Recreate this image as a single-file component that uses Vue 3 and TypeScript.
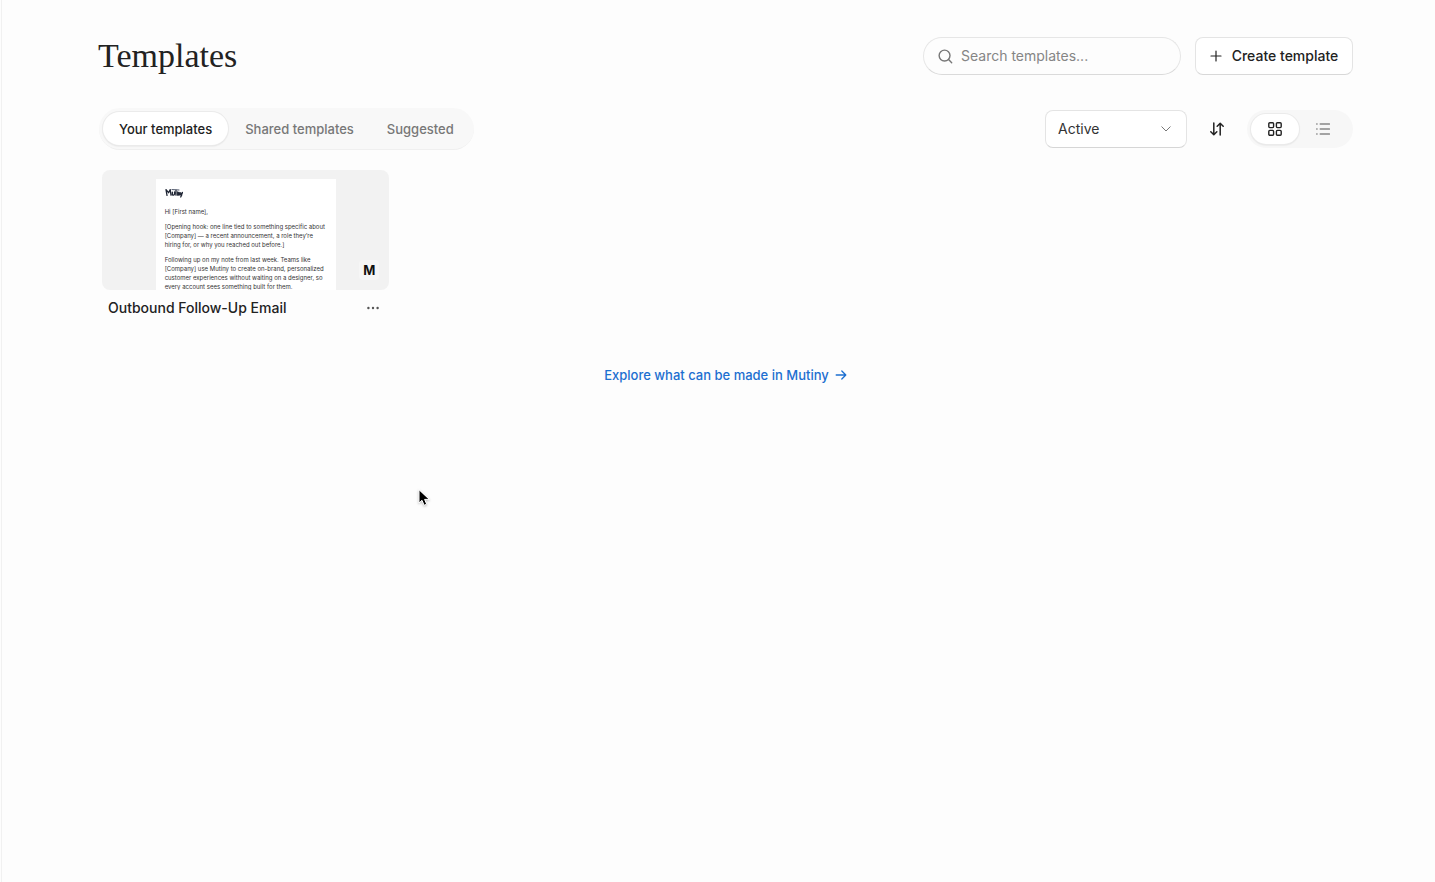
<script setup lang="ts">
import { ref } from 'vue'

const tabs = ['Your templates', 'Shared templates', 'Suggested']
const activeTab = ref(tabs[0])
const view = ref<'grid' | 'list'>('grid')
const query = ref('')
const status = ref('Active')

const templates = [
  {
    name: 'Outbound Follow-Up Email',
    badge: 'M',
    paragraphs: [
      ['Hi [First name],'],
      [
        '[Opening hook: one line tied to something specific about',
        '[Company] — a recent announcement, a role they’re',
        'hiring for, or why you reached out before.]',
      ],
      [
        'Following up on my note from last week. Teams like',
        '[Company] use Mutiny to create on-brand, personalized',
        'customer experiences without waiting on a designer, so',
        'every account sees something built for them.',
      ],
    ],
  },
]
</script>

<template>
  <main class="page">
    <header class="header">
      <h1 class="title">Templates</h1>
      <div class="header-actions">
        <label class="search">
          <svg class="search-icon" viewBox="0 0 16 16" aria-hidden="true">
            <circle cx="7" cy="7" r="5.8" />
            <path d="M11.3 11.3 14.6 14.6" />
          </svg>
          <input v-model="query" type="text" placeholder="Search templates..." aria-label="Search templates" />
        </label>
        <button class="create" type="button">
          <svg class="plus-icon" viewBox="0 0 12 12" aria-hidden="true"><path d="M6 1v10M1 6h10" /></svg>
          Create template
        </button>
      </div>
    </header>

    <div class="toolbar">
      <nav class="tabs" aria-label="Template collections">
        <button
          v-for="tab in tabs"
          :key="tab"
          type="button"
          class="tab"
          :class="{ selected: tab === activeTab }"
          @click="activeTab = tab"
        >{{ tab }}</button>
      </nav>
      <div class="filters">
        <div class="select">
          <select v-model="status" aria-label="Status">
            <option>Active</option>
            <option>Archived</option>
          </select>
          <svg class="chevron" viewBox="0 0 10 6" aria-hidden="true"><path d="M.8.8 5 5 9.2.8" /></svg>
        </div>
        <button class="sort" type="button" aria-label="Sort">
          <svg viewBox="0 0 14 14" aria-hidden="true">
            <path d="M3.8 1v11.6M.8 9.7l3 3 3-3M10.2 13V1.4M7.2 4.3l3-3 3 3" />
          </svg>
        </button>
        <div class="views">
          <button type="button" class="view" :class="{ selected: view === 'grid' }" aria-label="Grid view" @click="view = 'grid'">
            <svg viewBox="0 0 14 14" aria-hidden="true">
              <rect x=".8" y=".8" width="4.8" height="4.8" rx="1" />
              <rect x="8.4" y=".8" width="4.8" height="4.8" rx="1" />
              <rect x=".8" y="8.4" width="4.8" height="4.8" rx="1" />
              <rect x="8.4" y="8.4" width="4.8" height="4.8" rx="1" />
            </svg>
          </button>
          <button type="button" class="view" :class="{ selected: view === 'list' }" aria-label="List view" @click="view = 'list'">
            <svg viewBox="0 0 14 14" aria-hidden="true">
              <path d="M4.2 2h9.2M4.2 7h9.2M4.2 12h9.2M.7 2h.4M.7 7h.4M.7 12h.4" />
            </svg>
          </button>
        </div>
      </div>
    </div>

    <section class="grid">
      <article v-for="item in templates" :key="item.name" class="card">
        <div class="preview">
          <div class="sheet">
            <svg class="logo" viewBox="0 0 18 10" role="img" aria-label="Mutiny">
              <path d="M1 1.6 2 7.4M1.2 1.8l2.4 2.9L5.2 1.6l.8 5.6M7.4 4.2v2.6c.8.7 1.7.2 2.2-.6V4M11 2.2v5M12.7 4v3.2M14 7.2V4.4l1.4 2.4M15.8 4.6l.7 2.4L17.6 4.4M16.7 7l-1 2" />
              <path class="logo-bar" d="M7 1.6 14 2" />
            </svg>
            <p v-for="(lines, i) in item.paragraphs" :key="i">
              <span v-for="line in lines" :key="line">{{ line }}</span>
            </p>
          </div>
          <span class="badge">{{ item.badge }}</span>
        </div>
        <div class="caption">
          <h2>{{ item.name }}</h2>
          <button class="more" type="button" aria-label="More options">
            <svg viewBox="0 0 12 4" aria-hidden="true">
              <circle cx="1.4" cy="2" r="1.2" /><circle cx="6" cy="2" r="1.2" /><circle cx="10.6" cy="2" r="1.2" />
            </svg>
          </button>
        </div>
      </article>
    </section>

    <a class="explore" href="#explore">
      Explore what can be made in Mutiny
      <svg viewBox="0 0 12 12" aria-hidden="true"><path d="M1.2 6h9.6M6.8 2 10.8 6l-4 4" /></svg>
    </a>

    <svg class="pointer" viewBox="0 0 12 18" aria-hidden="true">
      <path d="M1 1v13l3-2.7 2.1 5 2.6-1.1-2.1-4.8H11z" />
    </svg>
  </main>
</template>

<style>
body {
  background: #fdfdfd;
}
</style>

<style scoped>
.page {
  box-sizing: border-box;
  min-height: 100vh;
  margin-left: 1px;
  padding: 37px 82px 40px 96px;
  border-left: 1px solid #f1f1f1;
  display: flex;
  flex-direction: column;
  color: #222;
  font-family: Inter, "Liberation Sans", sans-serif;
  font-size: 14px;
  line-height: 20px;
}
button, input, select {
  box-sizing: border-box;
  margin: 0;
  font: inherit;
  color: inherit;
}
button {
  display: flex;
  align-items: center;
  justify-content: center;
  padding: 0;
  border: 0;
  background: none;
  cursor: pointer;
}
svg {
  display: block;
  flex: none;
  fill: none;
  stroke: currentColor;
  stroke-linecap: round;
  stroke-linejoin: round;
}
.header, .toolbar {
  display: flex;
  align-items: center;
  justify-content: space-between;
}
.title {
  margin: 0;
  font: 400 34px/38px "Liberation Serif", serif;
}
.header-actions {
  display: flex;
  gap: 14px;
}
.search {
  box-sizing: border-box;
  display: flex;
  align-items: center;
  gap: 8px;
  width: 258px;
  height: 38px;
  padding: 0 14px;
  border: 1px solid #e6e6e6;
  border-bottom-color: #dadada;
  border-radius: 19px;
  color: #777;
}
.search-icon {
  width: 15px;
  height: 15px;
  stroke-width: 1.5;
}
.search input {
  flex: 1;
  min-width: 0;
  padding: 0;
  border: 0;
  outline: 0;
  background: none;
  color: #222;
}
.search input::placeholder {
  color: #858585;
  opacity: 1;
}
.create {
  gap: 10px;
  width: 158px;
  height: 38px;
  border: 1px solid #e4e4e4;
  border-bottom-color: #d8d8d8;
  border-radius: 8px;
  background: #fff;
  font-weight: 500;
}
.plus-icon {
  width: 12px;
  height: 12px;
  stroke-width: 1.2;
}
.toolbar {
  margin-top: 33px;
}
.tabs {
  display: flex;
  gap: 1px;
  height: 33px;
  margin-left: 1px;
  padding: 4px;
  border-bottom: 1px solid #efefef;
  border-radius: 22px;
  background: #f8f8f8;
}
.tab {
  padding: 0 16px;
  border-radius: 17px;
  color: #777;
  font-size: 13px;
  font-weight: 500;
}
.selected {
  background: #fff;
  box-shadow: 0 0 0 1px #ebebeb, 0 1px 2px #00000024;
  color: #222;
}
.filters {
  display: flex;
  align-items: center;
}
.select {
  display: grid;
  align-items: center;
  width: 142px;
}
.select > * {
  grid-area: 1 / 1;
}
.select select {
  width: 100%;
  height: 38px;
  padding: 0 12px;
  appearance: none;
  border: 1px solid #e4e4e4;
  border-bottom-color: #d6d6d6;
  border-radius: 8px;
  background: #fff;
  color: #333;
}
.chevron {
  justify-self: end;
  margin-right: 16px;
  width: 10px;
  height: 6px;
  color: #777;
  pointer-events: none;
}
.sort {
  width: 60px;
  height: 32px;
}
.sort svg {
  width: 14px;
  height: 14px;
  stroke-width: 1.5;
}
.views {
  display: flex;
  padding: 4px 6px 4px 4px;
  border-radius: 20px;
  background: #f7f7f7;
}
.view {
  width: 48px;
  height: 30px;
  border-radius: 15px;
  color: #888;
}
.view.selected {
  color: #222;
}
.view svg {
  width: 14px;
  height: 14px;
  stroke-width: 1.4;
}
.grid {
  display: grid;
  grid-template-columns: repeat(4, 1fr);
  gap: 34px;
  margin: 20px 0 0 4px;
}
.preview {
  position: relative;
  display: flex;
  justify-content: center;
  height: 120px;
  overflow: hidden;
  border-radius: 8px;
  background: #f2f2f2;
}
.sheet {
  box-sizing: border-box;
  width: 180px;
  height: 200px;
  margin-top: 9px;
  padding: 9px 0 0 9px;
  background: #fff;
  color: #333;
  font-size: 6px;
  line-height: 9px;
  white-space: nowrap;
}
.sheet p {
  margin: 0 0 6px;
}
.sheet span {
  display: block;
}
.logo {
  width: 18px;
  height: 10px;
  margin-bottom: 9px;
  color: #202635;
  stroke-width: 1.3;
}
.logo-bar {
  stroke: #4a5367;
  stroke-width: 1;
}
.badge {
  position: absolute;
  right: 10px;
  bottom: 10px;
  width: 20px;
  border-radius: 4px;
  background: #f6f6f6;
  color: #111;
  font-size: 13px;
  font-weight: 700;
  text-align: center;
}
.caption {
  display: flex;
  align-items: center;
  justify-content: space-between;
  padding: 8px 10px 0 6px;
}
.caption h2 {
  margin: 0;
  font-size: 14px;
  font-weight: 500;
}
.more svg {
  width: 12px;
  height: 4px;
  fill: #555;
  stroke: none;
}
.explore {
  display: flex;
  align-items: center;
  align-self: center;
  gap: 6px;
  margin-top: 47px;
  color: #1c6fd0;
  font-size: 13px;
  font-weight: 500;
  text-decoration: none;
}
.explore svg {
  width: 12px;
  height: 12px;
  stroke-width: 1.3;
}
.pointer {
  position: absolute;
  top: 489px;
  left: 418px;
  width: 12px;
  height: 18px;
  fill: #000;
  stroke: #fff;
  stroke-width: 1;
  filter: drop-shadow(0 1px 1px #00000040);
  pointer-events: none;
}
</style>
